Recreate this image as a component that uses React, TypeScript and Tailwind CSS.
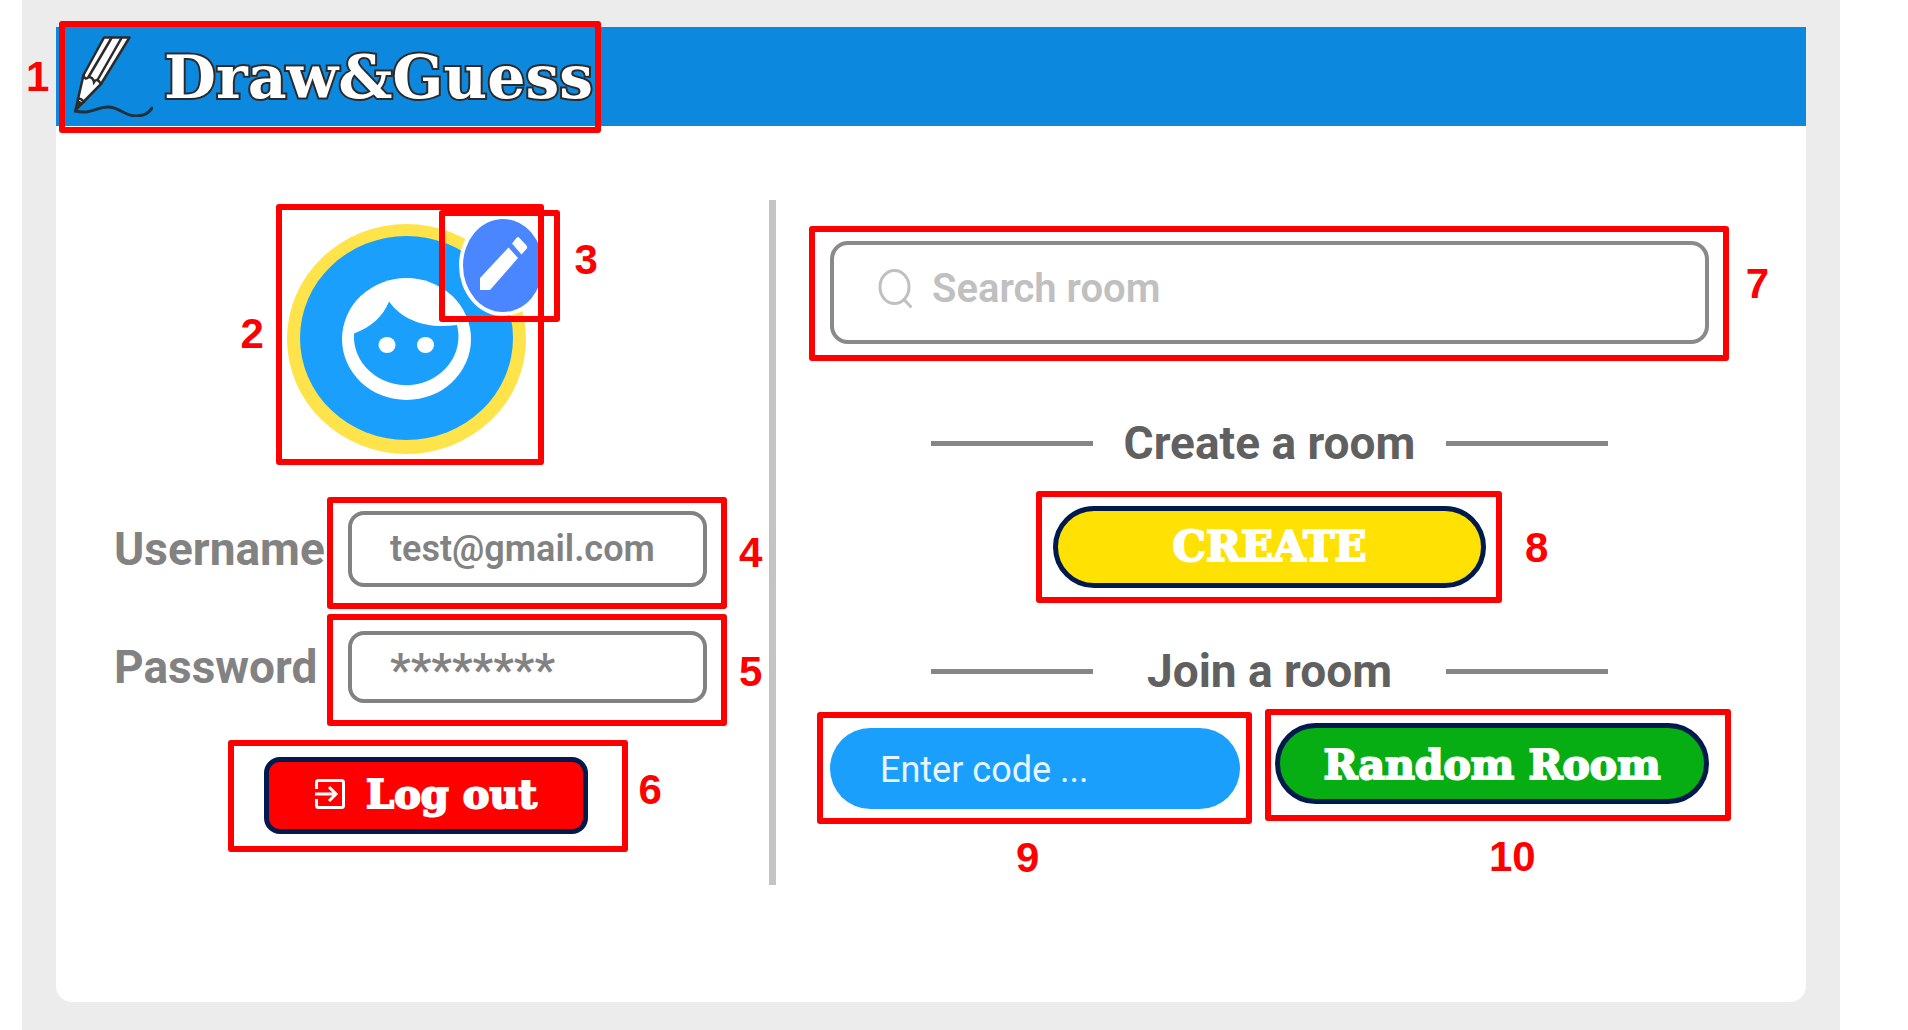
import { useId, useState } from "react";
import type { ReactNode } from "react";

/* Red call-out: a frame laid over a control plus its number. */
function Callout({ n, frame, label }: { n: number; frame: string; label: string }) {
  return (
    <>
      <span
        aria-hidden="true"
        className={`pointer-events-none absolute z-10 rounded-[3px] border-6 border-[#ff0000] ${frame}`}
      />
      <span
        className={`pointer-events-none absolute z-10 font-['Liberation_Sans',Arial,sans-serif] text-[42px] leading-none font-bold text-[#ff0000] ${label}`}
      >
        {n}
      </span>
    </>
  );
}

function LogoPencil() {
  return (
    <svg aria-hidden="true" viewBox="0 0 79 81" className="h-[81px] w-[79px] shrink-0" fill="none">
      <path
        d="M30 1.500H55.500L27 48L1.500 74L9.500 39Z"
        fill="#fff"
        stroke="#2b2b2b"
        strokeWidth="2.500"
        strokeLinejoin="round"
      />
      <path
        d="M37.500 2L14.500 41M47.500 2L23.500 44M9.500 39Q11 45 14.500 41Q19 41 20 46Q23 41 27 48M4 62Q8 63 10 66"
        stroke="#2b2b2b"
        strokeWidth="2.500"
        strokeLinecap="round"
      />
      <path d="M4 64L9 67L1 75Z" fill="#2b2b2b" />
      <path
        d="M1 75C16 79 22 71 34 71C46 71 50 80 62 80C70 80 75 77 78 72"
        stroke="#20303c"
        strokeWidth="3"
        strokeLinecap="round"
      />
    </svg>
  );
}

function Avatar() {
  return (
    <svg role="img" aria-label="Avatar" viewBox="0 0 239 230" className="h-[230px] w-[239px]">
      <ellipse cx="119.500" cy="115" rx="119.500" ry="115" fill="#fee34b" />
      <ellipse cx="119.500" cy="114" rx="106.500" ry="102" fill="#1aa0fc" />
      <ellipse cx="119.500" cy="115" rx="64.500" ry="61" fill="#fff" />
      <path
        d="M67 109.500C85 103 96 92 102 77.500C117 98 142 105 170 101A52.300 48.600 0 1 1 67 109.500Z"
        fill="#1aa0fc"
      />
      <ellipse cx="100" cy="121" rx="8.500" ry="8" fill="#fff" />
      <ellipse cx="138.500" cy="121" rx="8.500" ry="8" fill="#fff" />
    </svg>
  );
}

function EditPencil() {
  return (
    <svg aria-hidden="true" viewBox="0 0 80 93" className="h-full w-full" fill="#fff">
      <path d="M17 71V59L45.500 28.500L55 39L27 71Z" />
      <path d="M49 24.500L53.500 19Q55 17 56.500 19L63.500 26.500Q65 28 63.500 30L58.500 35.500Z" />
    </svg>
  );
}

function SearchIcon() {
  return (
    <svg
      aria-hidden="true"
      viewBox="0 0 34 40"
      className="h-10 w-[34px] shrink-0"
      fill="none"
      stroke="#c0c0c0"
      strokeWidth="3"
      strokeLinecap="round"
    >
      <ellipse cx="16.500" cy="18" rx="14.500" ry="16.500" />
      <path d="M26 30.500L32.500 37.500" />
    </svg>
  );
}

function ExitIcon() {
  return (
    <svg
      aria-hidden="true"
      viewBox="0 0 32 32"
      className="size-8 shrink-0"
      fill="none"
      stroke="#fff"
      strokeWidth="3"
    >
      <path d="M2.500 11V4.500Q2.500 2.500 4.500 2.500H27.500Q29.500 2.500 29.500 4.500V27.500Q29.500 29.500 27.500 29.500H4.500Q2.500 29.500 2.500 27.500V21" />
      <path d="M1 16H22M15 9L22 16L15 23" />
    </svg>
  );
}

function Field({
  label,
  initial,
  inputClass,
  children,
}: {
  label: string;
  initial: string;
  inputClass: string;
  children: ReactNode;
}) {
  const id = useId();
  const [value, setValue] = useState(initial);
  return (
    <div className="flex items-center">
      <label htmlFor={id} className="w-[234px] shrink-0 text-[46px] leading-[54px] font-bold text-[#828282]">
        {label}
      </label>
      <div className="relative min-w-0 flex-1">
        <input
          id={id}
          type="text"
          value={value}
          onChange={(e) => setValue(e.target.value)}
          className={`block w-full rounded-2xl border-4 border-[#828282] pl-[38px] font-semibold text-[#828282] outline-none ${inputClass}`}
        />
        {children}
      </div>
    </div>
  );
}

function SectionTitle({ children }: { children: ReactNode }) {
  return (
    <div className="flex items-center justify-between px-[101px]">
      <span className="h-[5px] w-[162px] bg-[#868686]" />
      <h2 className="text-[46px] leading-[54px] font-bold text-[#606060]">{children}</h2>
      <span className="h-[5px] w-[162px] bg-[#868686]" />
    </div>
  );
}

export default function App() {
  const [query, setQuery] = useState("");
  const [code, setCode] = useState("");

  return (
    <div className="flex min-h-screen bg-white pr-[68px] pl-[22px] font-[Roboto,sans-serif]">
      <div className="flex-1 bg-[#ececec] px-[34px] pt-[27px] pb-7">
        <div className="rounded-b-2xl bg-white">
          <header className="flex h-[99px] bg-[#0c89df]">
            <div className="relative flex items-center gap-[11px] pl-[18px]">
              <LogoPencil />
              <h1 className="font-['DejaVu_Serif',serif] text-[60px] leading-none font-bold whitespace-nowrap text-white [paint-order:stroke_fill] [-webkit-text-stroke:4px_#2b2b2b]">
                Draw&amp;Guess
              </h1>
              <Callout n={1} frame="-top-1.5 left-[3px] h-28 w-[542px]" label="top-[29px] -left-[30px]" />
            </div>
          </header>

          <main className="grid grid-cols-[713fr_7px_1030fr]">
            <section aria-label="Profile" className="flex flex-col pt-[98px] pr-[62px] pl-[58px]">
              <div className="relative mr-[9px] self-center">
                <Avatar />
                <button
                  type="button"
                  aria-label="Edit avatar"
                  className="absolute -top-[9px] left-[172px] h-[101px] w-[88px] rounded-[50%] border-4 border-white bg-[#4986ff]"
                >
                  <EditPencil />
                </button>
                <Callout n={2} frame="-top-5 -left-[11px] h-[261px] w-[268px]" label="top-[89px] -left-[46px]" />
                <Callout n={3} frame="-top-3.5 left-[152px] h-28 w-[121px]" label="top-[15px] left-[288px]" />
              </div>

              <div className="mt-[57px] flex flex-col gap-11">
                <Field label="Username" initial="test@gmail.com" inputClass="h-[76px] text-[36px]">
                  <Callout n={4} frame="-top-3.5 -left-[21px] h-28 w-[400px]" label="top-[21px] left-[391px]" />
                </Field>
                <Field label="Password" initial="********" inputClass="h-[72px] pt-1.5 text-[46px]">
                  <Callout n={5} frame="-top-[17px] -left-[21px] h-28 w-[400px]" label="top-[20px] left-[391px]" />
                </Field>
              </div>

              <div className="relative mt-[54px] ml-[30px] self-center">
                <button
                  type="button"
                  className="flex h-[77px] w-[324px] items-center justify-center gap-[20px] rounded-2xl border-5 border-[#001a4d] bg-[#ff0000] pb-1 font-['DejaVu_Serif',serif] text-[40px] leading-none font-bold text-white [-webkit-text-stroke:2px_white]"
                >
                  <ExitIcon />
                  Log out
                </button>
                <Callout n={6} frame="-top-[17px] -left-9 h-28 w-[400px]" label="top-[12px] left-[375px]" />
              </div>
            </section>

            <div className="mt-[74px] mb-[117px] h-[685px] bg-[#c4c4c4]" />

            <section aria-label="Rooms" className="pt-[115px] pr-[97px] pl-[54px]">
              <div className="relative">
                <label className="flex h-[103px] items-center gap-5 rounded-[18px] border-4 border-[#8a8a8a] pb-2 pl-11">
                  <SearchIcon />
                  <input
                    type="search"
                    aria-label="Search room"
                    placeholder="Search room"
                    value={query}
                    onChange={(e) => setQuery(e.target.value)}
                    className="min-w-0 flex-1 text-[40px] font-semibold text-[#606060] outline-none placeholder:text-[#c0c0c0]"
                  />
                </label>
                <Callout n={7} frame="-top-[15px] -right-5 -left-[21px] h-[135px]" label="top-[22px] -right-[60px]" />
              </div>

              <div className="mt-[72px]">
                <SectionTitle>Create a room</SectionTitle>
              </div>
              <div className="mt-9 flex justify-center">
                <div className="relative">
                  <button
                    type="button"
                    className="block h-[82px] w-[433px] rounded-full border-5 border-[#001a4d] bg-[#ffe104] font-['DejaVu_Serif',serif] text-[42px] leading-none font-bold text-white [-webkit-text-stroke:2px_white]"
                  >
                    CREATE
                  </button>
                  <Callout n={8} frame="-top-[15px] -left-[17px] h-28 w-[466px]" label="top-[21px] left-[472px]" />
                </div>
              </div>

              <div className="mt-14">
                <SectionTitle>Join a room</SectionTitle>
              </div>
              <div className="mt-[25px] grid h-[86px] grid-cols-[410fr_434fr] gap-[35px]">
                <div className="relative self-end">
                  <input
                    type="text"
                    aria-label="Room code"
                    placeholder="Enter code ..."
                    value={code}
                    onChange={(e) => setCode(e.target.value)}
                    className="block h-[81px] w-full rounded-full bg-[#1aa0fc] pt-0.5 pr-8 pl-[50px] text-[36px] text-white outline-none placeholder:text-[#e8f5ff]"
                  />
                  <Callout n={9} frame="-top-4 -right-3 -left-[13px] h-28" label="top-[109px] left-[186px]" />
                </div>
                <div className="relative self-start">
                  <button
                    type="button"
                    className="block h-[81px] w-full rounded-full border-5 border-[#001a4d] bg-[#06ae14] pt-1 font-['DejaVu_Serif',serif] text-[41px] leading-none font-bold whitespace-nowrap text-white [-webkit-text-stroke:2px_white]"
                  >
                    Random Room
                  </button>
                  <Callout n={10} frame="-top-3.5 -right-[22px] -left-[10px] h-28" label="top-[113px] left-[214px]" />
                </div>
              </div>
            </section>
          </main>
        </div>
      </div>
    </div>
  );
}
